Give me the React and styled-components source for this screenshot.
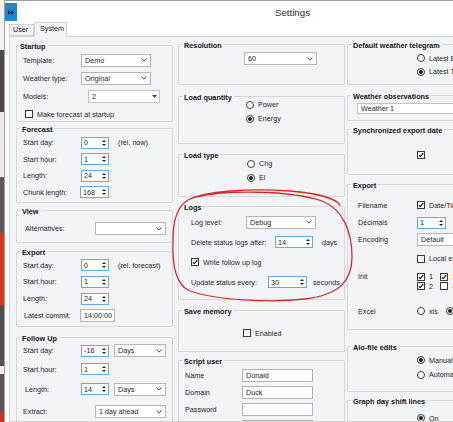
import React from 'react';
import styled, { createGlobalStyle } from 'styled-components';

const GlobalStyle = createGlobalStyle`
  html, body { margin: 0; padding: 0; width: 453px; height: 422px; overflow: hidden; background: #fff; }
  body { font-family: "Liberation Sans", Arial, sans-serif; font-size: 7.2px; color: #1e1e1e; }
  *, *::before, *::after { box-sizing: border-box; }
`;

const Desktop = styled.div`
  position: relative;
  display: flex;
  width: 453px;
  height: 422px;
  overflow: hidden;
`;

const Strip = styled.div`
  width: 4px;
  flex: none;
  background: linear-gradient(to bottom,
    #f4f4f4 0 50px, #4a4a4a 50px 112px, #ececec 112px 177px,
    #5b5b5b 177px 233px, #d23a22 233px 305px, #505050 305px 366px,
    #f0f0f0 366px 374px, #555 374px 412px, #c8351f 412px);
`;

const Window = styled.div`
  width: 576px;
  flex: none;
  display: flex;
  flex-direction: column;
  background: #fff;
  border-top: 1px solid #a0a0a0;
  border-left: 1px solid #a0a0a0;
`;

const TitleBar = styled.div`
  height: 21px;
  display: flex;
  align-items: flex-start;
  flex: none;
`;

const AppIcon = styled.div`
  width: 12px;
  height: 18px;
  margin-top: 2px;
  flex: none;
  display: flex;
  align-items: center;
  justify-content: center;
  background: #1c88d2;
`;

const Title = styled.div`
  flex: 1;
  padding: 6px 12px 0 0;
  text-align: center;
  font-size: 9.7px;
  line-height: 11px;
  color: #2b2b2b;
`;

const TabStrip = styled.div`
  height: 14px;
  display: flex;
  align-items: flex-end;
  padding-left: 4px;
  flex: none;
`;

const Tab = styled.div`
  position: relative;
  z-index: 1;
  width: ${p => p.$w}px;
  height: ${p => (p.$active ? 15 : 12)}px;
  margin-bottom: ${p => (p.$active ? -1 : 0)}px;
  padding-left: ${p => p.$pl}px;
  border: 1px solid #d4d4d4;
  border-bottom: ${p => (p.$active ? 'none' : '1px solid #d4d4d4')};
  background: ${p => (p.$active ? '#f3f4f8' : '#f0f0f0')};
  line-height: ${p => (p.$active ? 12 : 10)}px;
  white-space: nowrap;
`;

const TabPage = styled.div`
  flex: 1;
  margin-left: 4px;
  border: 1px solid #d4d4d4;
  background: #f3f4f8;
  display: flex;
  align-items: flex-start;
  gap: 5px;
  padding-left: 6px;
  overflow: hidden;
`;

const Column = styled.div`
  width: ${p => p.$w}px;
  flex: none;
  display: flex;
  flex-direction: column;
  & + & { margin-left: ${p => p.$gap ?? 0}px; }
`;

const Group = styled.fieldset`
  margin: ${p => p.$mt}px 0 0 0;
  height: ${p => p.$h}px;
  min-width: 0;
  flex: none;
  border: 1px solid #d7d8dd;
  border-radius: 1px;
  padding: 0 4px 0 6px;
`;

const Legend = styled.legend`
  margin-left: ${p => p.$ml ?? -3}px;
  padding: 2px 2px 0;
  font-weight: bold;
  font-size: 7.3px;
  line-height: 9px;
  color: #141414;
  white-space: nowrap;
`;

const Body = styled.div`
  display: flex;
  flex-direction: column;
  margin-top: ${p => p.$mt ?? 0}px;
`;

const Row = styled.div`
  display: flex;
  align-items: ${p => p.$align ?? 'center'};
  height: ${p => p.$h}px;
  margin-top: ${p => p.$mt ?? 0}px;
  flex: none;
  white-space: nowrap;
`;

const Label = styled.span`
  width: ${p => p.$w}px;
  margin-left: ${p => p.$ml ?? 0}px;
  flex: none;
  white-space: nowrap;
  line-height: ${p => p.$lh ?? 9}px;
`;

const Note = styled.span`
  margin-left: ${p => p.$ml ?? 0}px;
  white-space: nowrap;
`;

const SelectBox = styled.div`
  width: ${p => p.$w}px;
  height: 13px;
  margin-left: ${p => p.$ml ?? 0}px;
  flex: none;
  display: flex;
  align-items: center;
  justify-content: space-between;
  padding: 0 3px 0 3px;
  border: 1px solid #b7b7b7;
  background: #fff;
`;

const ComboBox = styled(SelectBox)`
  width: ${p => p.$w}px;
  padding-right: 2px;
  border-color: #c4c4c4;
`;

const SpinBox = styled.div`
  width: ${p => p.$w}px;
  height: 12px;
  margin-left: ${p => p.$ml ?? 0}px;
  flex: none;
  display: flex;
  align-items: center;
  justify-content: space-between;
  padding: 0 2px 0 2px;
  border: 1px solid #6ea6df;
  background: #fff;
`;

const TextBox = styled.div`
  width: ${p => p.$w}px;
  height: ${p => p.$hh ?? 13}px;
  margin-left: ${p => p.$ml ?? 0}px;
  flex: none;
  display: flex;
  align-items: center;
  padding: 0 3px;
  border: 1px solid ${p => p.$border ?? '#b3b3b3'};
  background: #fff;
  overflow: hidden;
`;

const Option = styled.span`
  display: inline-flex;
  align-items: center;
  gap: ${p => p.$gap ?? 4}px;
  margin-left: ${p => p.$ml ?? 0}px;
  white-space: nowrap;
  color: ${p => p.$color ?? 'inherit'};
`;

const CheckSquare = styled.span`
  width: 8px;
  height: 8px;
  flex: none;
  display: flex;
  align-items: center;
  justify-content: center;
  border: 1px solid #3a3a3a;
  background: #fff;
`;

const RadioCircle = styled.span`
  width: 8px;
  height: 8px;
  flex: none;
  border-radius: 50%;
  border: 1px solid #3a3a3a;
  background: #fff;
  display: flex;
  align-items: center;
  justify-content: center;
  &::after {
    content: '';
    display: ${p => (p.$on ? 'block' : 'none')};
    width: 4px;
    height: 4px;
    border-radius: 50%;
    background: #1e1e1e;
  }
`;

const InitGrid = styled.div`
  display: grid;
  grid-template-columns: 23px auto;
  grid-auto-rows: 9.5px;
  align-items: center;
  padding-top: 1px;
`;

const Annotation = styled.svg`
  position: absolute;
  left: 0;
  top: 0;
  pointer-events: none;
`;

const Chevron = () => (
  <svg width="6" height="4" viewBox="0 0 6 4">
    <polyline points="0.6,0.6 3,3.2 5.4,0.6" fill="none" stroke="#3a3a3a" strokeWidth="0.9" />
  </svg>
);

const DropTriangle = () => (
  <svg width="5" height="3" viewBox="0 0 5 3">
    <path d="M0 0 L5 0 L2.5 3 Z" fill="#444" />
  </svg>
);

const SpinArrows = () => (
  <svg width="4" height="8" viewBox="0 0 4 8">
    <path d="M0 3 L2 1 L4 3 Z M0 5 L2 7 L4 5 Z" fill="#222" />
  </svg>
);

const Tick = () => (
  <svg width="6" height="6" viewBox="0 0 6 6">
    <polyline points="0.8,3.1 2.3,4.7 5.3,1" fill="none" stroke="#1e1e1e" strokeWidth="1.2" />
  </svg>
);

const Select = ({ w, ml, children }) => (
  <SelectBox $w={w} $ml={ml}><span>{children}</span><Chevron /></SelectBox>
);

const Spin = ({ w = 28, ml, children }) => (
  <SpinBox $w={w} $ml={ml}><span>{children}</span><SpinArrows /></SpinBox>
);

const Check = ({ on, ml, color, children }) => (
  <Option $ml={ml} $color={color}>
    <CheckSquare>{on && <Tick />}</CheckSquare>
    {children}
  </Option>
);

const Radio = ({ on, ml, children }) => (
  <Option $ml={ml}>
    <RadioCircle $on={on} />
    {children}
  </Option>
);

export default function App() {
  return (
    <>
      <GlobalStyle />
      <Desktop>
        <Strip />
        <Window>
          <TitleBar>
            <AppIcon>
              <svg width="6" height="5" viewBox="0 0 6 5">
                <path d="M0 0 L3 2.5 L0 5 Z M3 0 L6 2.5 L3 5 Z" fill="#10283f" />
              </svg>
            </AppIcon>
            <Title>Settings</Title>
          </TitleBar>
          <TabStrip>
            <Tab $w={25} $pl={3}>User</Tab>
            <Tab $w={33} $pl={5} $active>System</Tab>
          </TabStrip>
          <TabPage>
            {/* Left column */}
            <Column $w={157}>
              <Group $mt={2.7} $h={82.3}>
                <Legend $ml={-5}>Startup</Legend>
                <Body $mt={0.8}>
                  <Row $h={18}><Label $w={58}>Template:</Label><Select w={70}>Demo</Select></Row>
                  <Row $h={18}><Label $w={58}>Weather type:</Label><Select w={70}>Original</Select></Row>
                  <Row $h={18}>
                    <Label $w={65}>Models:</Label>
                    <ComboBox $w={72}><span>2</span><DropTriangle /></ComboBox>
                  </Row>
                  <Row $h={18}><Check ml={2}>Make forecast at startup</Check></Row>
                </Body>
              </Group>
              <Group $mt={0.7} $h={80.3}>
                <Legend>Forecast</Legend>
                <Body $mt={1}>
                  <Row $h={16.5}><Label $w={58}>Start day:</Label><Spin>0</Spin><Note $ml={9}>(rel. now)</Note></Row>
                  <Row $h={16.5}><Label $w={58}>Start hour:</Label><Spin>1</Spin></Row>
                  <Row $h={16.5}><Label $w={58}>Length:</Label><Spin>24</Spin></Row>
                  <Row $h={16.5}><Label $w={57}>Chunk length:</Label><Spin w={29}>168</Spin></Row>
                </Body>
              </Group>
              <Group $mt={1.7} $h={38.3}>
                <Legend>View</Legend>
                <Body $mt={5.3}>
                  <Row $h={16}><Label $w={70} $ml={2}>Alternatives:</Label><Select w={71} /></Row>
                </Body>
              </Group>
              <Group $mt={2.7} $h={81.3}>
                <Legend>Export</Legend>
                <Body>
                  <Row $h={16.8}><Label $w={58}>Start day:</Label><Spin>0</Spin><Note $ml={9}>(rel. forecast)</Note></Row>
                  <Row $h={16.8}><Label $w={58}>Start hour:</Label><Spin>1</Spin></Row>
                  <Row $h={16.8}><Label $w={58}>Length:</Label><Spin>24</Spin></Row>
                  <Row $h={16.8}><Label $w={56} $ml={1}>Latest commit:</Label><TextBox $w={35}>14:00:00</TextBox></Row>
                </Body>
              </Group>
              <Group $mt={4.7} $h={100}>
                <Legend>Follow Up</Legend>
                <Body>
                  <Row $h={16}><Label $w={58}>Start day:</Label><Spin>-16</Spin><Select w={52} ml={5}>Days</Select></Row>
                  <Row $h={21}><Label $w={58}>Start hour:</Label><Spin>1</Spin></Row>
                  <Row $h={19}><Label $w={56} $ml={2}>Length:</Label><Spin>14</Spin><Select w={52} ml={5}>Days</Select></Row>
                  <Row $h={26}><Label $w={72}>Extract:</Label><Select w={71}>1 day ahead</Select></Row>
                </Body>
              </Group>
            </Column>

            {/* Middle column */}
            <Column $w={167}>
              <Group $mt={2.2} $h={45.8}>
                <Legend>Resolution</Legend>
                <Body $mt={2.8}>
                  <Row $h={12}><Select w={73} ml={59}>60</Select></Row>
                </Body>
              </Group>
              <Group $mt={5.7} $h={53.3}>
                <Legend>Load quantity</Legend>
                <Body $mt={-3.7}>
                  <Row $h={14}><Radio ml={61}>Power</Radio></Row>
                  <Row $h={14}><Radio ml={61} on>Energy</Radio></Row>
                </Body>
              </Group>
              <Group $mt={4.7} $h={48.3}>
                <Legend>Load type</Legend>
                <Body $mt={-2.7}>
                  <Row $h={14}><Radio ml={62}>Chg</Radio></Row>
                  <Row $h={14}><Radio ml={62} on>El</Radio></Row>
                </Body>
              </Group>
              <Group $mt={4.2} $h={98.8}>
                <Legend>Logs</Legend>
                <Body>
                  <Row $h={20}><Label $w={55} $ml={6}>Log level:</Label><Select w={70}>Debug</Select></Row>
                  <Row $h={20}><Label $w={84} $ml={6}>Delete status logs after:</Label><Spin w={38}>14</Spin><Note $ml={9}>days</Note></Row>
                  <Row $h={20}><Check ml={6} on>Write follow up log</Check></Row>
                  <Row $h={20}><Label $w={77} $ml={6}>Update status every:</Label><Spin w={39}>30</Spin><Note $ml={6}>seconds</Note></Row>
                </Body>
              </Group>
              <Group $mt={4.7} $h={47.3}>
                <Legend>Save memory</Legend>
                <Body $mt={10.8}>
                  <Row $h={14}><Check ml={58}>Enabled</Check></Row>
                </Body>
              </Group>
              <Group $mt={2.7} $h={90}>
                <Legend>Script user</Legend>
                <Body $mt={1.3}>
                  <Row $h={17}><Label $w={57}>Name</Label><TextBox $w={71}>Donald</TextBox></Row>
                  <Row $h={17}><Label $w={57}>Domain</Label><TextBox $w={71}>Duck</TextBox></Row>
                  <Row $h={17}><Label $w={57}>Password</Label><TextBox $w={71} /></Row>
                  <Row $h={17}><Label $w={57} /><TextBox $w={71} /></Row>
                </Body>
              </Group>
            </Column>

            {/* Right column */}
            <Column $w={200} style={{ marginLeft: -3 }}>
              <Group $mt={2.2} $h={45.8}>
                <Legend>Default weather telegram</Legend>
                <Body $mt={1.5}>
                  <Row $h={13.5}><Radio ml={63}>Latest Ensemble</Radio></Row>
                  <Row $h={13.5}><Radio ml={63} on>Latest Telegram</Radio></Row>
                </Body>
              </Group>
              <Group $mt={4.7} $h={31.3}>
                <Legend>Weather observations</Legend>
                <Body $mt={2.3}>
                  <Row $h={11}><TextBox $w={140} $hh={11} $ml={3} $border="#c2c2c2">Weather 1</TextBox></Row>
                </Body>
              </Group>
              <Group $mt={2.7} $h={51.3}>
                <Legend>Synchronized export date</Legend>
                <Body $mt={13.8}>
                  <Row $h={14}><Check ml={63} on /></Row>
                </Body>
              </Group>
              <Group $mt={4.2} $h={150.8}>
                <Legend>Export</Legend>
                <Body $mt={6.8}>
                  <Row $h={17}><Label $w={59} $ml={4}>Filename</Label><Check on>Date/Time stamp</Check></Row>
                  <Row $h={18}><Label $w={59} $ml={4}>Decimals</Label><Spin w={29}>1</Spin></Row>
                  <Row $h={15}><Label $w={59} $ml={4}>Encoding</Label><Select w={80}>Default</Select></Row>
                  <Row $h={24}><Check ml={63}>Local export</Check></Row>
                  <Row $h={21} $align="flex-start">
                    <Label $w={59} $ml={4} $lh={11}>Init</Label>
                    <InitGrid>
                      <Check on>1</Check><Check on color="#e07a10">3</Check>
                      <Check on>2</Check><Check color="#e07a10">4</Check>
                    </InitGrid>
                  </Row>
                  <Row $h={23} $mt={8}>
                    <Label $w={59} $ml={4}>Excel</Label>
                    <Radio>xls</Radio>
                    <Radio on ml={8}>xlsx</Radio>
                  </Row>
                </Body>
              </Group>
              <Group $mt={11.2} $h={50.8}>
                <Legend>Aio-file edits</Legend>
                <Body $mt={1}>
                  <Row $h={14.5}><Radio ml={63} on>Manual</Radio></Row>
                  <Row $h={14.5}><Radio ml={63}>Automatic</Radio></Row>
                </Body>
              </Group>
              <Group $mt={3.2} $h={40}>
                <Legend>Graph day shift lines</Legend>
                <Body $mt={5.3}>
                  <Row $h={14}><Radio ml={63} on>On</Radio></Row>
                </Body>
              </Group>
            </Column>
          </TabPage>
        </Window>
        <Annotation width="453" height="422" viewBox="0 0 453 422">
          <path
            d="M196 197 C225 190 290 190 322 201 C343 209 352 232 352 257 C352 280 340 295 305 299 C270 303 215 300 190 291 C175 285 172 263 173 240 C173 222 176 207 188 200 C205 191 250 188 290 191 C315 193 335 198 340 205"
            fill="none"
            stroke="#d82a2a"
            strokeWidth="1.3"
            strokeLinecap="round"
          />
        </Annotation>
      </Desktop>
    </>
  );
}
